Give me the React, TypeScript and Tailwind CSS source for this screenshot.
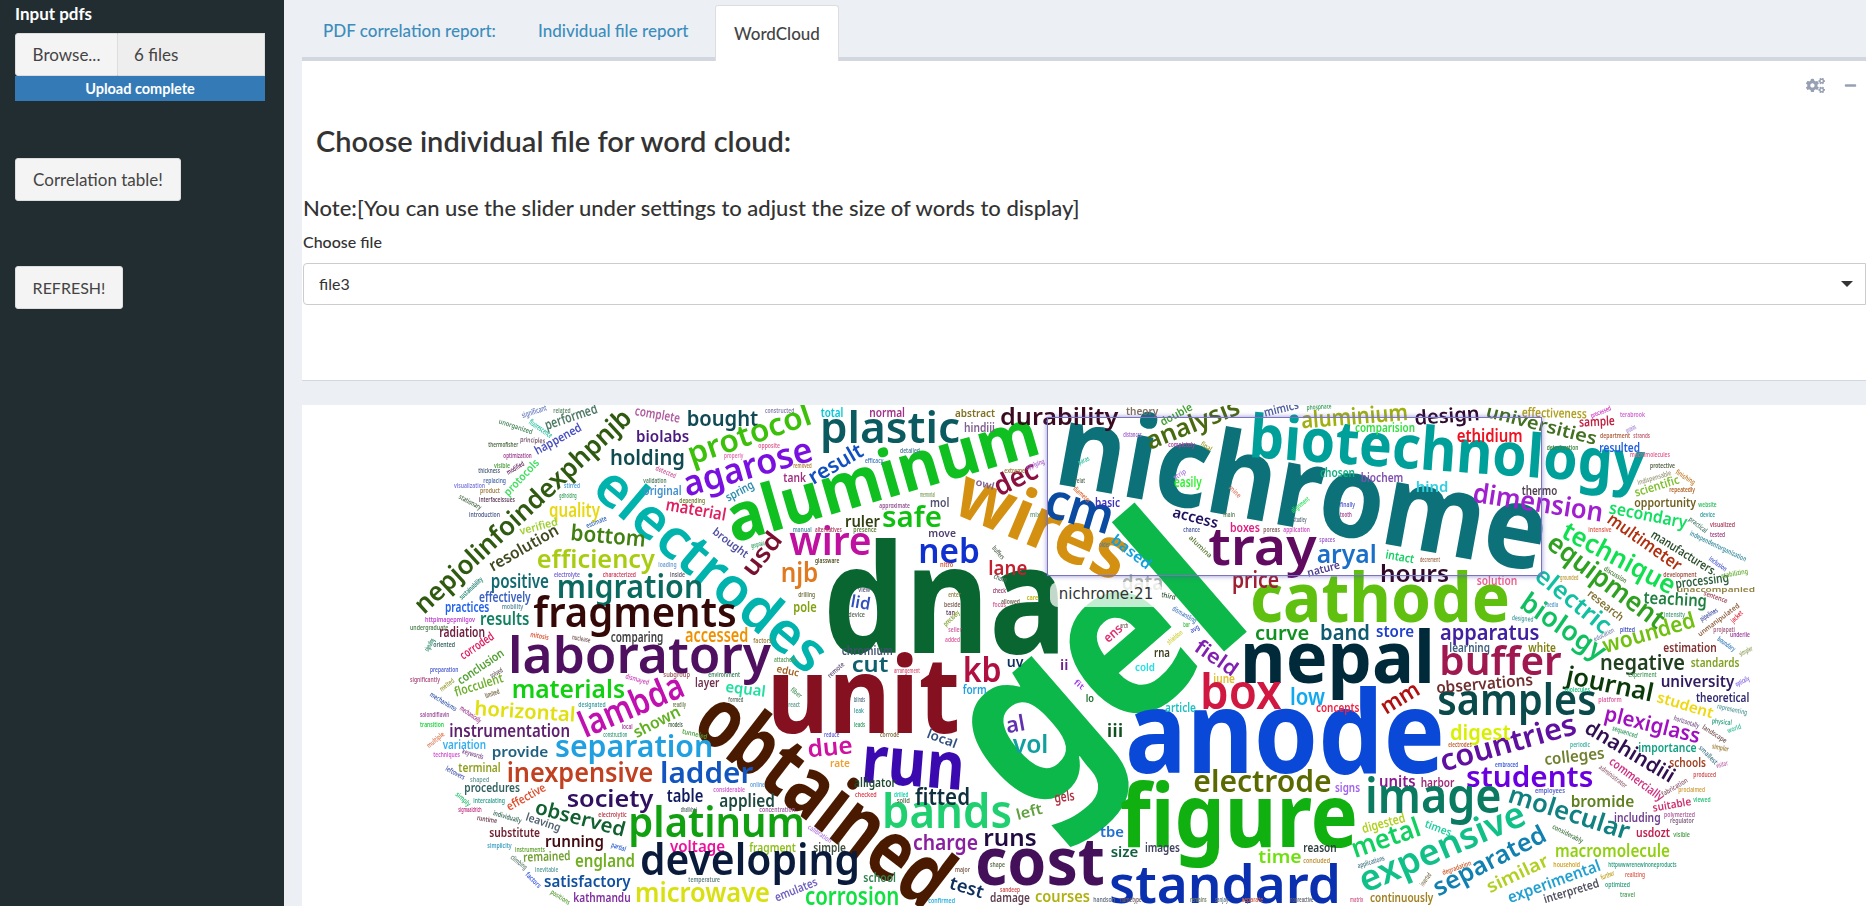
import { FaCogs, FaMinus } from "react-icons/fa";

// text, baseline start x/y, baseline end x/y, font size, colour
type Word = [string, number, number, number, number, number, string];

// page coordinates
const big: Word[] = [
  ["gel", 1028, 822, 1258, 622, 225, "#0cb84a"],
  ["plastic", 820, 443, 960, 443, 43, "#0a5a60"],
  ["safe", 882, 527, 942, 527, 28, "#10c010"],
  ["aluminum", 733, 543, 1043, 453, 66, "#10c020"],
  ["electrodes", 590, 492, 808, 676, 56, "#00b3ad"],
  ["laboratory", 508, 673, 771, 673, 50, "#4f1060"],
  ["dna", 823, 653, 1067, 653, 150, "#0a6630"],
  ["wires", 950, 512, 1117, 582, 72, "#d49010"],
  ["nichrome", 1052, 483, 1540, 572, 115, "#0c7178"],
  ["biotechnology", 1248, 457, 1643, 485, 60, "#00a09a"],
  ["cathode", 1250, 622, 1510, 622, 68, "#60c010"],
  ["unit", 767, 733, 960, 733, 105, "#851020"],
  ["obtained", 689, 730, 925, 912, 84, "#4a1a00"],
  ["run", 860, 782, 963, 790, 66, "#3a0ab0"],
  ["anode", 1125, 773, 1445, 773, 114, "#0a48d8"],
  ["figure", 1120, 847, 1358, 847, 88, "#10b010"],
  ["nepal", 1240, 683, 1435, 683, 72, "#002a3a"],
  ["bands", 882, 828, 1012, 828, 46, "#20d070"],
  ["cost", 975, 885, 1105, 885, 66, "#45105a"],
  ["standard", 1109, 903, 1341, 903, 53, "#0a30b0"],
  ["fitted", 915, 805, 970, 805, 24, "#103040"],
  ["charge", 913, 850, 978, 850, 22, "#8a20a0"],
  ["hours", 1380, 582, 1449, 582, 24, "#300828"],
  ["price", 1232, 588, 1279, 588, 24, "#a02030"],
  ["field", 1193, 650, 1232, 677, 20, "#8020b0"],
];

// crop at (400,400), coordinates 3x
const a: Word[] = [
  ["nepjolinfoindexphpnjb", 72, 645, 700, 60, 26, "#2f5a0f"],
  ["significant", 368, 55, 442, 30, 8, "#6a7fc0"],
  ["related", 460, 38, 512, 38, 7, "#5d8a6a"],
  ["performed", 440, 90, 595, 38, 14, "#4f7a66"],
  ["complete", 703, 45, 838, 68, 13, "#b05aa0"],
  ["bought", 860, 78, 1075, 78, 21, "#0f4a55"],
  ["constructed", 1095, 38, 1183, 38, 7, "#8a7fb0"],
  ["total", 1262, 50, 1330, 50, 13, "#00c8d8"],
  ["normal", 1408, 50, 1515, 50, 13, "#a0308a"],
  ["unorganized", 295, 70, 395, 103, 7, "#4e8a60"],
  ["fluorescence", 385, 70, 450, 115, 8, "#30c0a0"],
  ["principles", 360, 125, 435, 130, 7, "#7a5a70"],
  ["thermofisher", 265, 140, 355, 140, 7, "#4a6a40"],
  ["happened", 412, 165, 548, 90, 12, "#4a50c0"],
  ["protocol", 875, 195, 1240, 70, 31, "#3cc00a"],
  ["biolabs", 708, 125, 868, 125, 16, "#4a1a80"],
  ["holding", 630, 195, 855, 195, 22, "#0f4a50"],
  ["optimization", 310, 175, 395, 175, 7, "#a04090"],
  ["opposite", 1075, 145, 1140, 145, 7, "#e06090"],
  ["properly", 972, 175, 1030, 175, 7, "#e070b0"],
  ["result", 1240, 255, 1395, 165, 21, "#0f4fc0"],
  ["efficacy", 1395, 190, 1450, 190, 7, "#4a80c0"],
  ["detailed", 1500, 160, 1560, 160, 7, "#5080a0"],
  ["thickness", 235, 220, 300, 220, 7, "#506080"],
  ["visible", 282, 205, 330, 205, 7, "#50a040"],
  ["modified", 325, 225, 375, 195, 7, "#6a2a60"],
  ["removed", 1180, 205, 1235, 205, 7, "#b08040"],
  ["replacing", 250, 250, 318, 250, 7, "#5070b0"],
  ["visualization", 162, 265, 255, 265, 7, "#7a7ae0"],
  ["stirred", 492, 265, 540, 265, 7, "#50a0e0"],
  ["validation", 730, 250, 800, 250, 7, "#508060"],
  ["detected", 765, 210, 825, 235, 7, "#d060a0"],
  ["agarose", 860, 290, 1245, 180, 35, "#7a10e0"],
  ["protocols", 325, 290, 420, 190, 11, "#40e060"],
  ["tank", 1150, 245, 1218, 245, 12, "#a03080"],
  ["spring", 985, 305, 1065, 262, 12, "#3090b0"],
  ["original", 730, 285, 845, 285, 12, "#4090d0"],
  ["product", 240, 278, 300, 278, 7, "#a08040"],
  ["gelholding", 478, 295, 530, 295, 7, "#40a060"],
  ["interfaceissues", 237, 307, 345, 307, 7, "#604060"],
  ["stationary", 175, 295, 240, 330, 7, "#507050"],
  ["depending", 838, 308, 915, 308, 7, "#708030"],
  ["approximate", 1438, 323, 1530, 323, 7, "#905090"],
  ["quality", 447, 350, 600, 350, 19, "#e8d810"],
  ["material", 795, 330, 975, 362, 17, "#e02060"],
  ["ruler", 1335, 380, 1440, 380, 16, "#304010"],
  ["introduction", 207, 350, 300, 350, 7, "#506090"],
  ["estimate", 562, 385, 622, 360, 7, "#4070c0"],
  ["bottom", 510, 420, 735, 440, 22, "#408010"],
  ["verified", 362, 405, 475, 375, 11, "#a0d030"],
  ["resolution", 278, 515, 480, 400, 16, "#404a20"],
  ["brought", 935, 400, 1035, 475, 11, "#5050a0"],
  ["wire", 1168, 465, 1415, 465, 40, "#c010a0"],
  ["manual", 1178, 397, 1235, 397, 7, "#5090a0"],
  ["alternatives", 1245, 397, 1325, 397, 7, "#b04060"],
  ["presence", 1360, 397, 1430, 397, 7, "#608040"],
  ["usd", 1060, 535, 1150, 420, 25, "#7a1030"],
  ["efficiency", 410, 505, 765, 505, 25, "#a8cc10"],
  ["geopraxia", 1055, 445, 1095, 435, 7, "#30a060"],
  ["njb", 1142, 545, 1255, 545, 27, "#e07a20"],
  ["positive", 272, 563, 447, 563, 19, "#106a70"],
  ["migration", 470, 595, 910, 595, 32, "#0a6a60"],
  ["fragments", 400, 680, 1010, 680, 41, "#350808"],
  ["electrolyte", 462, 530, 540, 530, 7, "#7060d0"],
  ["characterized", 608, 530, 708, 530, 7, "#d04060"],
  ["inside", 810, 530, 855, 530, 7, "#606070"],
  ["glassware", 1245, 488, 1318, 488, 7, "#505020"],
  ["loading", 775, 500, 830, 500, 7, "#70a0d0"],
  ["effectively", 237, 605, 392, 605, 14, "#3a60c0"],
  ["practices", 135, 635, 268, 635, 15, "#2060f0"],
  ["mobility", 305, 627, 370, 627, 7, "#6090a0"],
  ["sustainability", 185, 600, 250, 540, 7, "#208070"],
  ["pole", 1180, 635, 1250, 635, 14, "#80a010"],
  ["results", 240, 675, 388, 675, 17, "#108060"],
  ["lid", 1350, 620, 1408, 630, 17, "#3050c0"],
  ["drilling", 1195, 590, 1245, 590, 7, "#707040"],
  ["view", 1375, 575, 1410, 575, 7, "#606080"],
  ["device", 1345, 650, 1395, 650, 7, "#607060"],
  ["httpimagepmilgov", 75, 665, 225, 665, 7, "#c040d0"],
  ["undergraduate", 30, 690, 145, 690, 7, "#508050"],
  ["radiation", 118, 710, 255, 710, 15, "#702040"],
  ["accessed", 855, 725, 1045, 725, 20, "#f09000"],
  ["comparing", 632, 725, 790, 725, 14, "#404040"],
  ["mitosis", 390, 710, 445, 720, 7, "#e05030"],
  ["nuclease", 515, 718, 570, 728, 7, "#806060"],
  ["factors", 1060, 730, 1115, 730, 7, "#a08040"],
  ["signaling", 85, 755, 105, 720, 7, "#208060"],
  ["oriented", 100, 740, 165, 740, 7, "#306060"],
  ["corroded", 190, 780, 285, 715, 12, "#e02060"],
  ["chromium", 1325, 765, 1478, 765, 13, "#405070"],
];

// crop at (920,400), coordinates 3x
const b: Word[] = [
  ["abstract", 105, 50, 225, 50, 11, "#807020"],
  ["durability", 240, 75, 595, 75, 24, "#3a0a20"],
  ["theory", 618, 45, 715, 45, 11, "#807060"],
  ["hindiii", 132, 95, 225, 95, 12, "#806090"],
  ["double", 728, 78, 820, 28, 11, "#40a030"],
  ["mimics", 1035, 50, 1138, 25, 12, "#5060a0"],
  ["phosphate", 1160, 30, 1235, 25, 7, "#40a060"],
  ["analysis", 690, 150, 965, 40, 25, "#4a6a10"],
  ["aluminium", 1145, 85, 1465, 60, 23, "#a0b010"],
  ["comparision", 1305, 95, 1485, 95, 13, "#30e040"],
  ["cm", 365, 345, 565, 405, 50, "#0a4aa0"],
  ["dec", 238, 290, 360, 230, 28, "#8a1040"],
  ["owl", 165, 255, 220, 270, 10, "#806090"],
  ["extreme", 253, 218, 315, 218, 7, "#a08040"],
  ["applying", 320, 210, 375, 190, 7, "#b060d0"],
  ["mol", 30, 320, 88, 320, 12, "#505070"],
  ["memorial", 0, 292, 45, 292, 7, "#80a060"],
  ["move", 25, 410, 108, 410, 11, "#504070"],
  ["neb", -5, 490, 180, 490, 35, "#1030d0"],
  ["lane", 205, 525, 322, 525, 20, "#c02030"],
  ["mix", 330, 352, 360, 352, 7, "#70a080"],
  ["nitro", 60, 500, 100, 500, 7, "#e05030"],
  ["buffers", 215, 445, 245, 480, 7, "#607060"],
  ["chain", 220, 535, 258, 548, 7, "#507060"],
  ["check", 218, 578, 258, 578, 7, "#a04070"],
  ["enter", 85, 592, 122, 592, 7, "#908040"],
  ["beside", 72, 622, 122, 622, 7, "#806050"],
  ["tan", 78, 645, 105, 645, 7, "#604060"],
  ["precisely", 78, 680, 120, 640, 7, "#80a030"],
  ["seller", 85, 697, 125, 697, 7, "#d060a0"],
  ["added", 75, 727, 120, 727, 7, "#e060a0"],
  ["allowed", 243, 612, 300, 612, 7, "#706050"],
  ["focus", 218, 622, 258, 622, 7, "#d06090"],
  ["care", 320, 600, 355, 600, 7, "#c0b010"],
  ["easily", 762, 262, 845, 262, 14, "#30f030"],
  ["basic", 525, 320, 600, 320, 13, "#4030c0"],
  ["paras", 478, 195, 510, 180, 7, "#30c0a0"],
  ["relat", 465, 250, 495, 250, 7, "#607060"],
  ["diameter", 458, 268, 505, 310, 7, "#e07040"],
  ["mine", 925, 265, 955, 295, 7, "#e08070"],
  ["alignment", 1120, 340, 1170, 300, 7, "#30e060"],
  ["finally", 1260, 322, 1305, 322, 7, "#5060d0"],
  ["tooth", 1260, 350, 1295, 350, 7, "#a04090"],
  ["strip", 765, 240, 800, 218, 7, "#b080e0"],
  ["chosen", 1200, 230, 1305, 230, 13, "#10b080"],
  ["biochem", 1322, 245, 1450, 245, 13, "#8050b0"],
  ["access", 755, 350, 890, 385, 15, "#201060"],
  ["boxes", 930, 395, 1020, 395, 12, "#e02080"],
  ["main", 910, 350, 945, 350, 7, "#608060"],
  ["studley", 1120, 367, 1160, 367, 7, "#607080"],
  ["chance", 790, 395, 840, 395, 7, "#5060a0"],
  ["poreas", 1030, 397, 1080, 397, 7, "#806060"],
  ["application", 1090, 395, 1170, 395, 7, "#d050c0"],
  ["spaces", 1198, 425, 1245, 425, 7, "#a060d0"],
  ["older", 538, 440, 570, 440, 7, "#5080a0"],
  ["alumina", 805, 415, 868, 475, 7, "#608040"],
  ["based", 570, 425, 680, 510, 15, "#10a0e0"],
  ["tray", 865, 495, 1190, 495, 52, "#600a60"],
  ["aryal", 1190, 490, 1370, 490, 25, "#1a70c8"],
  ["intact", 1395, 475, 1480, 490, 12, "#10d060"],
  ["decrement", 1500, 487, 1560, 487, 7, "#a07050"],
  ["nature", 1165, 530, 1262, 505, 11, "#504090"],
  ["data", 605, 570, 730, 570, 22, "#b0b8b0"],
  ["curve", 1005, 720, 1168, 720, 20, "#109020"],
  ["band", 1200, 720, 1350, 720, 22, "#105a70"],
  ["store", 1368, 710, 1482, 710, 16, "#2040d0"],
  ["ens", 565, 730, 610, 690, 13, "#e03070"],
  ["arch", 600, 683, 625, 683, 7, "#806060"],
  ["rna", 702, 770, 750, 770, 13, "#404020"],
  ["dismantling", 755, 630, 825, 670, 7, "#5080c0"],
  ["bar", 790, 680, 810, 680, 7, "#40c040"],
  ["avg", 815, 700, 840, 685, 7, "#5060d0"],
  ["shieldon", 748, 735, 790, 700, 7, "#d0d040"],
  ["third", 722, 590, 765, 600, 7, "#406040"],
  ["distances", 610, 110, 665, 110, 7, "#a060d0"],
  ["completely", 745, 142, 825, 142, 7, "#b040a0"],
  ["final", 840, 135, 870, 155, 7, "#a0a030"],
];

// crop at (400,650), coordinates 3x
const c: Word[] = [
  ["preparation", 90, 67, 175, 67, 7, "#5060d0"],
  ["significantly", 30, 97, 120, 97, 7, "#b05080"],
  ["conclusion", 182, 105, 315, 15, 12, "#50a030"],
  ["solved", 275, 85, 310, 65, 7, "#706060"],
  ["melted", 125, 125, 165, 95, 7, "#a0a040"],
  ["flocculent", 168, 140, 312, 95, 13, "#70b030"],
  ["limited", 258, 145, 300, 130, 7, "#706040"],
  ["materials", 335, 145, 675, 145, 26, "#10d010"],
  ["lambda", 555, 265, 860, 135, 36, "#c010b0"],
  ["horizontal", 222, 195, 525, 215, 20, "#e0e010"],
  ["instrumentation", 148, 260, 510, 260, 17, "#602070"],
  ["shown", 710, 265, 845, 195, 16, "#60b020"],
  ["layer", 885, 112, 958, 112, 12, "#703050"],
  ["equal", 975, 125, 1095, 140, 15, "#20e0a0"],
  ["educ", 1128, 65, 1195, 80, 10, "#a06020"],
  ["cut", 1355, 65, 1465, 65, 22, "#106070"],
  ["due", 1225, 322, 1360, 310, 24, "#d010a0"],
  ["rate", 1290, 350, 1350, 350, 11, "#f0a030"],
  ["separation", 465, 322, 940, 322, 31, "#20a0e0"],
  ["provide", 275, 320, 445, 320, 15, "#206080"],
  ["variation", 128, 298, 258, 298, 12, "#30b0f0"],
  ["keywords", 185, 310, 248, 328, 7, "#805090"],
  ["techniques", 100, 322, 180, 322, 7, "#d050d0"],
  ["multiple", 87, 295, 135, 255, 7, "#e08060"],
  ["transition", 60, 232, 132, 232, 7, "#20d040"],
  ["salondiflavin", 60, 202, 148, 202, 7, "#a050a0"],
  ["mechanically", 178, 178, 238, 220, 7, "#a04090"],
  ["mechanisms", 88, 137, 165, 185, 7, "#4060b0"],
  ["designated", 535, 172, 617, 172, 7, "#40a0a0"],
  ["readily", 818, 172, 858, 172, 7, "#708050"],
  ["react", 1165, 172, 1200, 172, 7, "#60a090"],
  ["fiber", 1170, 122, 1200, 145, 7, "#60a070"],
  ["formed", 985, 155, 1030, 155, 7, "#607060"],
  ["terminal", 175, 365, 302, 365, 13, "#90a020"],
  ["inexpensive", 320, 395, 760, 395, 27, "#c04020"],
  ["ladder", 780, 398, 1060, 398, 29, "#1055c0"],
  ["procedures", 193, 425, 360, 425, 13, "#306060"],
  ["society", 500, 472, 760, 472, 24, "#301060"],
  ["table", 800, 455, 910, 455, 17, "#101a60"],
  ["applied", 958, 470, 1125, 470, 17, "#204a40"],
  ["effective", 328, 483, 440, 420, 12, "#e05030"],
  ["alligator", 1362, 412, 1488, 412, 13, "#204a30"],
  ["considerable", 940, 425, 1035, 425, 7, "#d060d0"],
  ["observed", 402, 490, 670, 560, 20, "#106030"],
  ["platinum", 685, 560, 1215, 560, 41, "#10a010"],
  ["substitute", 268, 560, 420, 560, 13, "#702030"],
  ["leaving", 375, 510, 478, 545, 11, "#506070"],
  ["running", 435, 592, 612, 592, 16, "#400a10"],
  ["voltage", 810, 605, 975, 605, 16, "#f010a0"],
  ["fragment", 1048, 605, 1188, 605, 13, "#90c020"],
  ["simple", 1240, 605, 1338, 605, 12, "#405040"],
  ["developing", 720, 675, 1380, 675, 43, "#0a1a3a"],
  ["england", 525, 650, 705, 650, 18, "#70b020"],
  ["remained", 370, 635, 512, 630, 13, "#70a030"],
  ["satisfactory", 432, 712, 692, 712, 16, "#1050a0"],
  ["microwave", 705, 755, 1110, 755, 27, "#d8e010"],
  ["corrosion", 1215, 765, 1498, 765, 25, "#10e040"],
  ["emulates", 1130, 755, 1255, 705, 12, "#7060c0"],
  ["school", 1390, 695, 1488, 695, 12, "#308050"],
  ["kathmandu", 520, 755, 692, 755, 13, "#8030a0"],
  ["temperature", 865, 697, 960, 697, 7, "#608080"],
  ["calibration", 1222, 535, 1290, 580, 7, "#b080e0"],
  ["partial", 632, 590, 675, 605, 7, "#3060d0"],
  ["simplicity", 262, 595, 335, 595, 7, "#40a0c0"],
  ["electrolytic", 595, 502, 680, 502, 7, "#c04050"],
  ["concentration", 1078, 487, 1185, 487, 7, "#a060a0"],
  ["dhalikhel", 842, 487, 890, 487, 7, "#607070"],
  ["sigmaaldrich", 175, 487, 245, 487, 7, "#c03080"],
  ["individually", 278, 495, 362, 520, 7, "#407060"],
  ["runtime", 230, 510, 290, 520, 7, "#704050"],
  ["intercalating", 220, 458, 315, 458, 7, "#30a090"],
  ["simply", 165, 435, 205, 470, 7, "#30c070"],
  ["leftovers", 135, 360, 190, 390, 7, "#5060b0"],
  ["shaped", 210, 397, 268, 397, 7, "#70a0a0"],
  ["online", 1050, 410, 1095, 410, 7, "#60a0e0"],
  ["instruments", 345, 607, 435, 607, 7, "#60a030"],
  ["climbing", 330, 625, 375, 660, 7, "#608070"],
  ["inevitable", 405, 665, 475, 665, 7, "#60a0a0"],
  ["factors", 375, 675, 415, 715, 7, "#4060e0"],
  ["positions", 450, 730, 505, 765, 7, "#60a040"],
  ["checked", 1365, 440, 1430, 440, 7, "#e04050"],
  ["drilled", 1482, 440, 1525, 440, 7, "#10d0b0"],
  ["solid", 1490, 460, 1530, 460, 7, "#607050"],
  ["reduce", 1272, 260, 1318, 260, 7, "#6060e0"],
  ["construction", 610, 262, 682, 262, 7, "#40a080"],
  ["local", 665, 238, 698, 238, 7, "#b040a0"],
  ["models", 805, 232, 848, 232, 7, "#406040"],
  ["tunneled", 845, 250, 920, 268, 7, "#50a040"],
  ["corrode", 1440, 260, 1498, 260, 7, "#807040"],
  ["dismayed", 675, 85, 745, 105, 7, "#d050c0"],
  ["subgroup", 790, 82, 870, 82, 7, "#a06060"],
  ["environment", 925, 82, 1020, 82, 7, "#408060"],
  ["attached", 1122, 35, 1185, 35, 7, "#60a060"],
  ["remote", 1290, 85, 1335, 45, 7, "#706080"],
  ["blinds", 1362, 155, 1395, 155, 7, "#507080"],
  ["leads", 1362, 232, 1395, 232, 7, "#30a060"],
  ["leak", 1362, 188, 1392, 188, 7, "#40a0a0"],
  ["arrangement", 1482, 68, 1560, 68, 7, "#e06080"],
];

// crop at (920,650), coordinates 3x
const d: Word[] = [
  ["kb", 128, 95, 245, 95, 34, "#b01040"],
  ["uv", 260, 50, 310, 50, 15, "#103060"],
  ["ii", 420, 60, 445, 60, 15, "#702090"],
  ["cold", 645, 62, 705, 62, 11, "#20e0e0"],
  ["form", 128, 132, 200, 132, 12, "#20a0e0"],
  ["june", 880, 98, 945, 98, 12, "#e0c030"],
  ["box", 840, 178, 1085, 178, 48, "#d01840"],
  ["low", 1110, 165, 1215, 165, 24, "#10a8f0"],
  ["concepts", 1188, 185, 1318, 185, 12, "#f02040"],
  ["local", 18, 262, 105, 295, 13, "#305080"],
  ["lo", 497, 155, 522, 155, 10, "#207030"],
  ["article", 735, 185, 828, 185, 13, "#20c0c0"],
  ["fit", 460, 100, 485, 120, 8, "#a040f0"],
  ["al", 262, 250, 318, 240, 22, "#6030b0"],
  ["vol", 278, 310, 385, 310, 26, "#10a0a0"],
  ["iii", 560, 262, 610, 262, 18, "#105020"],
  ["electrode", 820, 425, 1235, 425, 30, "#5a6a00"],
  ["signs", 1245, 425, 1320, 425, 12, "#a060f0"],
  ["left", 293, 510, 370, 490, 15, "#60a040"],
  ["gels", 405, 458, 465, 450, 14, "#b03040"],
  ["runs", 190, 588, 350, 588, 23, "#200a40"],
  ["tbe", 540, 560, 612, 560, 15, "#2070d0"],
  ["size", 572, 620, 655, 620, 14, "#106040"],
  ["images", 675, 605, 780, 605, 12, "#404060"],
  ["time", 1015, 640, 1145, 640, 18, "#70e010"],
  ["reason", 1150, 605, 1250, 605, 12, "#304040"],
  ["test", 85, 715, 185, 745, 18, "#103060"],
  ["damage", 210, 755, 330, 755, 13, "#604050"],
  ["courses", 345, 755, 510, 755, 16, "#b0b010"],
  ["continuously", 1350, 755, 1540, 755, 13, "#a08020"],
  ["major", 105, 665, 150, 665, 7, "#806050"],
  ["shape", 210, 650, 255, 650, 7, "#607050"],
  ["confirmed", 25, 758, 105, 758, 7, "#20b0e0"],
  ["sandeep", 240, 725, 300, 725, 7, "#d05050"],
  ["handson", 520, 757, 585, 757, 7, "#607080"],
  ["nametype", 600, 757, 665, 757, 7, "#706060"],
  ["remains", 810, 757, 860, 757, 7, "#708060"],
  ["sanjay", 885, 757, 925, 757, 7, "#607080"],
  ["separate", 965, 757, 1030, 757, 7, "#d06040"],
  ["nonreactive", 1110, 757, 1180, 757, 7, "#606070"],
  ["matrix", 1290, 757, 1330, 757, 7, "#d06090"],
];

// crop at (1300,400), coordinates 3x
const e: Word[] = [
  ["design", 345, 75, 540, 60, 20, "#300a30"],
  ["effectiveness", 665, 50, 860, 55, 13, "#b0a020"],
  ["universities", 555, 50, 885, 135, 18, "#407020"],
  ["sample", 838, 80, 945, 75, 13, "#c02040"],
  ["ethidium", 470, 125, 668, 125, 18, "#f01020"],
  ["department", 900, 115, 990, 115, 7, "#b06040"],
  ["strands", 1000, 115, 1050, 115, 7, "#c06070"],
  ["resulted", 898, 155, 1020, 155, 12, "#2060e0"],
  ["hind", 347, 275, 445, 275, 15, "#30d0e0"],
  ["thermo", 665, 285, 772, 285, 12, "#504050"],
  ["dimension", 515, 305, 905, 365, 27, "#a020d0"],
  ["secondary", 925, 340, 1158, 385, 17, "#10e060"],
  ["multimeter", 918, 365, 1130, 515, 17, "#b03010"],
  ["manufacturers", 1050, 410, 1235, 525, 12, "#305030"],
  ["technique", 780, 410, 1110, 585, 26, "#10e050"],
  ["equipment", 735, 440, 1070, 690, 27, "#30a020"],
  ["electric", 700, 535, 910, 705, 24, "#10c0a0"],
  ["biology", 655, 620, 895, 785, 27, "#10c060"],
  ["research", 860, 585, 960, 665, 11, "#807030"],
  ["teaching", 1030, 610, 1220, 620, 17, "#208040"],
  ["processing", 1128, 565, 1288, 545, 13, "#306040"],
  ["scientific", 1008, 290, 1140, 250, 12, "#80c030"],
  ["opportunity", 1003, 320, 1188, 320, 13, "#706020"],
  ["wounded", 915, 760, 1190, 680, 22, "#70c010"],
  ["negative", 900, 810, 1155, 810, 21, "#204020"],
  ["standards", 1172, 800, 1318, 800, 13, "#80a020"],
  ["estimation", 1090, 755, 1250, 755, 13, "#803030"],
  ["journal", 795, 850, 1055, 905, 25, "#0a3a0a"],
  ["university", 1082, 860, 1303, 860, 16, "#301a60"],
  ["theoretical", 1188, 905, 1348, 905, 13, "#302a70"],
  ["student", 1068, 905, 1235, 955, 15, "#f0d810"],
  ["plexiglass", 910, 960, 1195, 1030, 21, "#a010c0"],
  ["samples", 412, 945, 890, 945, 43, "#0a4a4a"],
  ["observations", 410, 880, 700, 855, 16, "#703030"],
  ["learning", 448, 755, 570, 755, 13, "#406080"],
  ["white", 685, 755, 768, 755, 12, "#808010"],
  ["apparatus", 420, 720, 718, 720, 22, "#4020a0"],
  ["buffer", 418, 825, 785, 825, 40, "#a01850"],
  ["countries", 430, 1115, 835, 1000, 30, "#6010a0"],
  ["digest", 450, 1020, 632, 1020, 22, "#d8f000"],
  ["dnahindiii", 850, 995, 1110, 1150, 20, "#301050"],
  ["colleges", 735, 1095, 915, 1075, 16, "#708030"],
  ["importance", 1015, 1055, 1190, 1055, 13, "#10a080"],
  ["schools", 1108, 1100, 1218, 1100, 13, "#a04020"],
  ["commercially", 925, 1090, 1080, 1205, 12, "#d03080"],
  ["students", 498, 1160, 880, 1160, 29, "#6a00e0"],
  ["bromide", 812, 1220, 1003, 1220, 16, "#608020"],
  ["molecular", 620, 1205, 980, 1320, 25, "#108080"],
  ["suitable", 1060, 1235, 1175, 1215, 11, "#d03070"],
  ["including", 942, 1265, 1082, 1265, 12, "#704090"],
  ["usdozt", 1008, 1310, 1110, 1310, 12, "#c02050"],
  ["mm", 258, 945, 365, 880, 22, "#b01010"],
  ["units", 237, 1160, 347, 1160, 16, "#8a1a90"],
  ["harbor", 362, 1160, 463, 1160, 13, "#a02a7a"],
  ["image", 195, 1240, 605, 1240, 49, "#0a7a60"],
  ["digested", 190, 1300, 318, 1265, 13, "#b0d020"],
  ["metal", 165, 1375, 368, 1305, 27, "#10d060"],
  ["times", 372, 1280, 450, 1310, 11, "#20d0a0"],
  ["expensive", 195, 1480, 685, 1270, 36, "#10c088"],
  ["separated", 415, 1490, 745, 1320, 25, "#1080b0"],
  ["similar", 570, 1480, 750, 1395, 18, "#b0d020"],
  ["experimental", 630, 1510, 905, 1410, 16, "#20a0d0"],
  ["interpreted", 735, 1510, 900, 1460, 12, "#505060"],
  ["macromolecule", 765, 1370, 1110, 1370, 17, "#90d010"],
  ["solution", 530, 555, 652, 555, 12, "#f06090"],
  ["processed", 875, 55, 935, 30, 7, "#d040c0"],
  ["terabrook", 960, 50, 1035, 50, 7, "#d060d0"],
  ["proteins", 982, 100, 1010, 85, 7, "#a080d0"],
  ["deterioration", 740, 150, 835, 150, 7, "#408040"],
  ["protective", 1050, 205, 1125, 205, 7, "#506040"],
  ["indispensable", 1015, 255, 1115, 225, 7, "#a0a080"],
  ["finishing", 1125, 220, 1180, 255, 7, "#c08030"],
  ["macromolecules", 990, 170, 1110, 170, 7, "#e06090"],
  ["repeatedly", 1108, 275, 1185, 275, 7, "#b06020"],
  ["website", 1195, 320, 1250, 320, 7, "#30c060"],
  ["device", 1200, 350, 1245, 350, 7, "#30a0a0"],
  ["practical", 1165, 360, 1215, 400, 7, "#508070"],
  ["visualized", 1230, 380, 1305, 380, 7, "#b04060"],
  ["tested", 1230, 410, 1275, 410, 7, "#a04080"],
  ["independentorganization", 1168, 405, 1335, 485, 7, "#4090a0"],
  ["inclusion", 1225, 480, 1275, 515, 7, "#5060d0"],
  ["intensive", 865, 395, 935, 395, 7, "#e06050"],
  ["stabilizing", 1265, 535, 1345, 520, 7, "#70b040"],
  ["unaccompanied", 1130, 575, 1365, 575, 7, "#908040"],
  ["development", 1090, 530, 1190, 530, 7, "#a05040"],
  ["sentence", 1210, 585, 1280, 610, 7, "#a05060"],
  ["jacket", 1300, 670, 1330, 640, 7, "#e03040"],
  ["intensity", 1092, 650, 1155, 650, 7, "#50a080"],
  ["pipelines", 1205, 665, 1255, 635, 7, "#4050a0"],
  ["unmanipulated", 1200, 710, 1320, 620, 7, "#906040"],
  ["projapati", 1240, 695, 1305, 695, 7, "#a06080"],
  ["underlie", 1290, 712, 1350, 712, 7, "#a040a0"],
  ["boundary", 1250, 720, 1300, 755, 7, "#4080c0"],
  ["simpler", 1322, 770, 1360, 750, 7, "#90a060"],
  ["grounded", 780, 540, 835, 540, 7, "#c0a040"],
  ["discussion", 910, 510, 975, 550, 7, "#508040"],
  ["media", 735, 620, 775, 620, 7, "#60a0d0"],
  ["designed", 635, 660, 700, 665, 7, "#50a0a0"],
  ["education", 885, 725, 945, 695, 7, "#8090b0"],
  ["pitted", 960, 695, 1005, 695, 7, "#4050c0"],
  ["experiment", 985, 830, 1070, 830, 7, "#50a060"],
  ["optically", 1310, 860, 1350, 840, 7, "#8060e0"],
  ["molecules", 795, 875, 870, 875, 7, "#20c080"],
  ["platform", 895, 905, 965, 905, 7, "#e060a0"],
  ["representing", 1250, 925, 1340, 945, 7, "#60a0a0"],
  ["physical", 1235, 970, 1295, 975, 7, "#30a080"],
  ["horizontally", 1120, 960, 1195, 985, 7, "#806090"],
  ["landscape", 1205, 985, 1275, 1030, 7, "#806060"],
  ["world", 1285, 1000, 1325, 985, 7, "#40c0a0"],
  ["smallest", 1195, 1045, 1245, 1095, 7, "#508090"],
  ["simpler", 1235, 1045, 1285, 1055, 7, "#a08040"],
  ["visitor", 1250, 1105, 1285, 1095, 7, "#c070b0"],
  ["sequenced", 935, 990, 1010, 1015, 7, "#40a070"],
  ["electrodes", 445, 1040, 515, 1040, 7, "#c06030"],
  ["periodic", 810, 1040, 870, 1040, 7, "#40b0a0"],
  ["embraced", 585, 1100, 655, 1100, 7, "#4060e0"],
  ["produced", 1180, 1130, 1248, 1130, 7, "#d05050"],
  ["fabrication", 1090, 1190, 1165, 1145, 7, "#906070"],
  ["proclaimed", 1135, 1175, 1215, 1175, 7, "#d0a040"],
  ["viewed", 1180, 1205, 1232, 1205, 7, "#30c080"],
  ["polymerized", 1092, 1250, 1185, 1250, 7, "#b060a0"],
  ["regulator", 1110, 1270, 1182, 1270, 7, "#806080"],
  ["visible", 1120, 1310, 1170, 1310, 7, "#50a050"],
  ["administrator", 895, 1105, 975, 1165, 7, "#a07080"],
  ["employees", 705, 1180, 795, 1180, 7, "#5060d0"],
  ["household", 760, 1400, 840, 1400, 7, "#d0a020"],
  ["httpwwwrenewinoneproducts", 925, 1400, 1130, 1400, 7, "#30a080"],
  ["further", 905, 1440, 945, 1425, 7, "#c0a020"],
  ["realizing", 975, 1430, 1035, 1430, 7, "#e06050"],
  ["optimized", 915, 1460, 990, 1460, 7, "#30a080"],
  ["travel", 960, 1490, 1005, 1490, 7, "#50a060"],
  ["degradation", 430, 1425, 515, 1395, 7, "#d06030"],
  ["considerably", 755, 1285, 845, 1330, 7, "#508050"],
  ["inverted", 370, 1460, 395, 1425, 7, "#807050"],
  ["applications", 175, 1405, 255, 1380, 7, "#508090"],
  ["concluded", 10, 1388, 90, 1388, 7, "#c09030"],
];

// the big words go first so the small ones sit on top of them
const zones: [number, number, number, Word[]][] = [
  [0, 0, 1, big],
  [400, 400, 3, a],
  [920, 400, 3, b],
  [400, 650, 3, c],
  [920, 650, 3, d],
  [1300, 400, 3, e],
];

function WordCloud() {
  return (
    <svg
      viewBox="302 405 1564 501"
      className="block h-[501px] w-full font-['Noto_Sans',sans-serif] font-semibold blur-[0.4px]"
    >
      {zones.map(([ox, oy, k, words]) =>
        words.map(([text, x1, y1, x2, y2, size, color], i) => {
          const x = ox + x1 / k;
          const y = oy + y1 / k;
          const dx = (x2 - x1) / k;
          const dy = (y2 - y1) / k;
          const angle = (Math.atan2(dy, dx) * 180) / Math.PI;
          return (
            <text
              key={`${ox}-${oy}-${i}`}
              x={x}
              y={y}
              fontSize={size}
              fontWeight={size >= 60 ? 700 : undefined}
              fill={color}
              transform={`rotate(${angle} ${x} ${y})`}
              textLength={Math.hypot(dx, dy)}
              lengthAdjust="spacingAndGlyphs"
            >
              {text}
            </text>
          );
        })
      )}
    </svg>
  );
}

function SideButton({ label, className }: { label: string; className: string }) {
  return (
    <button className={`block h-[43px] rounded-[3px] border border-[#ddd] bg-[#f4f4f4] text-[#444] ${className}`}>
      {label}
    </button>
  );
}

export default function App() {
  return (
    <div className="flex h-[906px] overflow-hidden bg-[#ecf0f5] font-['Lato',sans-serif] text-[#333]">
      <aside className="w-[284px] shrink-0 bg-[#222d32] px-[15px]">
        <div className="pt-[4px] text-[17px] font-bold leading-[20px] text-white">Input pdfs</div>
        <div className="mt-[9px] flex h-[43px] w-[250px] text-[17px] text-[#444]">
          <div className="flex w-[103px] items-center justify-center rounded-l-[3px] border border-[#ddd] bg-[#f4f4f4]">
            Browse...
          </div>
          <div className="flex flex-1 items-center border border-l-0 border-[#ddd] bg-[#eee] pl-4">6 files</div>
        </div>
        <div className="flex h-[25px] w-[250px] items-center justify-center bg-[#337ab7] text-[14.5px] font-bold text-white">
          Upload complete
        </div>
        <div className="mt-[57px]">
          <SideButton label="Correlation table!" className="w-[166px] text-[17px]" />
        </div>
        <div className="mt-[65px]">
          <SideButton label="REFRESH!" className="w-[108px] text-[16px]" />
        </div>
      </aside>

      <main className="min-w-0 flex-1">
        <nav className="flex h-[57px] items-end pt-[5px] text-[17px]">
          <a className="flex h-[52px] w-[233px] items-center pl-[39px] font-medium text-[#3c8dbc]">PDF correlation report:</a>
          <a className="flex h-[52px] w-[198px] items-center pl-[21px] font-medium text-[#3c8dbc]">Individual file report</a>
          <a className="relative z-10 flex h-[56px] w-[124px] items-center justify-center self-start rounded-t-[3px] border border-b-0 border-[#ddd] bg-white font-medium text-[#444]">
            WordCloud
          </a>
        </nav>

        <section className="ml-[18px] h-[324px] border-t-[4px] border-b border-[#d2d6de] bg-white">
          <div className="flex h-[48px] items-center justify-end gap-[19px] pr-[9px] text-[#97a0b3]">
            <FaCogs className="h-[19px] w-[19px]" />
            <FaMinus className="h-[13px] w-[13px]" />
          </div>
          <h2 className="ml-[14px] mt-[13px] text-[29px] font-semibold leading-[38px]">Choose individual file for word cloud:</h2>
          <p className="ml-[1px] mt-[33px] text-[22px] font-medium leading-[30px]">
            Note:[You can use the slider under settings to adjust the size of words to display]
          </p>
          <label className="ml-[1px] mt-[8px] block text-[16px] font-medium leading-[22px]">Choose file</label>
          <div className="ml-[1px] mt-[10px] flex h-[42px] items-center justify-between rounded-l-[4px] border border-[#ccc] pl-[15px] pr-[12px] text-[16px]">
            file3
            <span className="h-0 w-0 border-x-[6px] border-t-[6px] border-x-transparent border-t-[#333]" />
          </div>
        </section>

        <section className="relative ml-[18px] mt-[24px] bg-white">
          <WordCloud />
          {/* hover box and tooltip from the word cloud widget */}
          <div className="absolute left-[745px] top-[12px] h-[159px] w-[495px] border border-[#7a74c0] shadow-[0_0_5px_rgba(80,70,180,0.6)]" />
          <div className="absolute left-[748px] top-[177px] flex h-[25px] w-[112px] items-center justify-center rounded-[8px] bg-white/75 font-['DejaVu_Sans',sans-serif] text-[15px] text-[#333]">
            nichrome:21
          </div>
        </section>
      </main>
    </div>
  );
}
